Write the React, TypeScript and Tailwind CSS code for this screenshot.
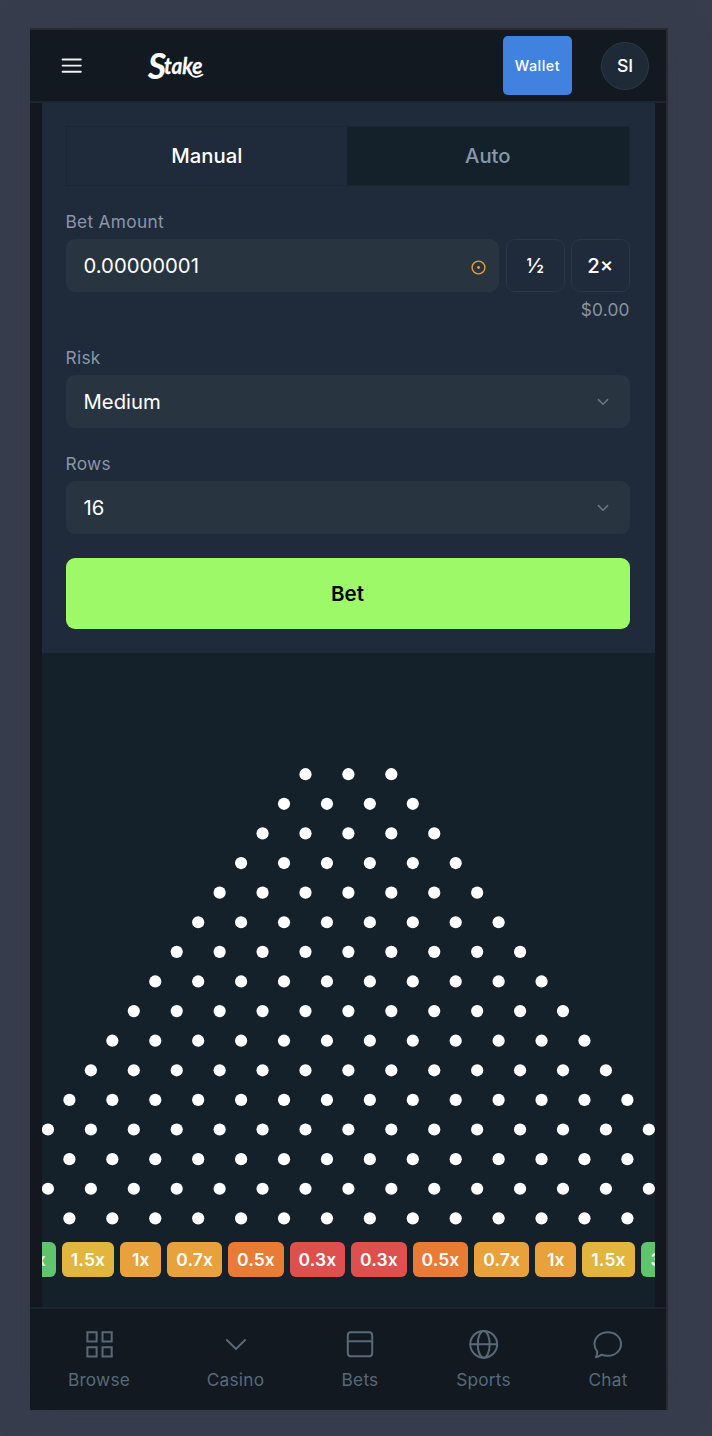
import React from "react";

const ROWS = Array.from({ length: 16 }, (_, i) => i + 3);
const PEG_GAP_X = 42.92;
const PEG_GAP_Y = 29.61;

const CHIPS: { label: string; style: string }[] = [
  { label: "3x", style: "w-[41px] bg-[#5fc46b]" },
  { label: "1.5x", style: "w-[52.5px] bg-[#e2b53f]" },
  { label: "1x", style: "w-[41px] bg-[#e9a13b]" },
  { label: "0.7x", style: "w-[55px] bg-[#e9a13b]" },
  { label: "0.5x", style: "w-[55.5px] bg-[#e97b35]" },
  { label: "0.3x", style: "w-[55.5px] bg-[#de504d]" },
  { label: "0.3x", style: "w-[55.5px] bg-[#de504d]" },
  { label: "0.5x", style: "w-[55.5px] bg-[#e97b35]" },
  { label: "0.7x", style: "w-[55px] bg-[#e9a13b]" },
  { label: "1x", style: "w-[41px] bg-[#e9a13b]" },
  { label: "1.5x", style: "w-[52.5px] bg-[#e2b53f]" },
  { label: "3x", style: "w-[41px] bg-[#5fc46b]" },
];

function Chevron() {
  return (
    <svg className="h-[18px] w-[18px]" viewBox="0 0 18 18" fill="none" stroke="#6b7684" strokeWidth="1.5" strokeLinecap="round" strokeLinejoin="round">
      <path d="M4.4 6.6L9 11.2L13.6 6.6" />
    </svg>
  );
}

function Select({ label, value }: { label: string; value: string }) {
  return (
    <div>
      <div className="h-[27px] text-[17.3px] leading-[20px] tracking-[0.3px] text-[#8b97aa]">{label}</div>
      <div className="flex h-[53px] items-center justify-between rounded-[9px] bg-[#283541] pr-[18px] pl-[18px] text-[20.3px] text-white">
        <span className="pt-[2px]">{value}</span>
        <Chevron />
      </div>
    </div>
  );
}

function NavItem({ label, width, children }: { label: string; width: string; children: React.ReactNode }) {
  return (
    <div className={"flex shrink-0 flex-col items-center text-[#586979] " + width}>
      <svg className="h-[36px] w-[36px]" viewBox="0 0 36 36" fill="none" stroke="currentColor" strokeWidth="2" strokeLinecap="round" strokeLinejoin="round">
        {children}
      </svg>
      <span className="mt-[7px] text-[17.3px] leading-[22px] tracking-[0.22px]">{label}</span>
    </div>
  );
}

function PegBoard() {
  return (
    <svg className="h-[460px] w-[613px] shrink-0" viewBox="0 0 613 460" fill="#ffffff">
      {ROWS.map((count, row) =>
        Array.from({ length: count }, (_, i) => (
          <circle key={`${row}-${i}`} cx={306.4 + (i - (count - 1) / 2) * PEG_GAP_X} cy={6.2 + row * PEG_GAP_Y} r="6.1" />
        )),
      )}
    </svg>
  );
}

export default function App() {
  return (
    <div className="h-[1436px] w-[712px] overflow-hidden bg-[#383d4d] pt-[28px] pl-[30px] font-['Inter',sans-serif] antialiased">
      <div className="flex h-[1382px] w-[638px] flex-col border-t-2 border-r-2 border-[#2a2a30] bg-[#14171f] shadow-[0_0_40px_rgba(45,55,65,0.25)]">
        <header className="flex h-[73px] shrink-0 items-center border-b-2 border-[#1a2733] bg-[#121920]">
          <svg className="ml-[31px] h-[20px] w-[22px]" viewBox="0 0 22 20" stroke="#f2f2f0" strokeWidth="1.9" strokeLinecap="round">
            <path d="M1.6 3.5H19.8M1.6 9.6H19.8M1.6 15.7H19.8" />
          </svg>
          <svg className="ml-[60px] h-[40px] w-[70px] overflow-visible" viewBox="0 0 70 40" role="img" aria-label="Stake">
            <g fill="#ffffff" stroke="#ffffff" strokeLinejoin="round" fontFamily="Lato, sans-serif" fontStyle="italic" fontWeight="700">
              <text x="5" y="32.6" fontSize="35.5" strokeWidth="0.2" textLength="18" lengthAdjust="spacingAndGlyphs">S</text>
              <text x="21" y="28.2" fontSize="23.5" strokeWidth="0.3" textLength="38.5" lengthAdjust="spacingAndGlyphs">take</text>
            </g>
            <path d="M47.5 28C50 31.6 55.5 31.6 59.6 28.6" fill="none" stroke="#ffffff" strokeWidth="1.8" strokeLinecap="round" />
          </svg>
          <button className="ml-[290px] h-[59px] w-[69px] rounded-[5px] bg-[#4181df] pt-[1px] text-[14.4px] font-medium tracking-[0.5px] text-white">Wallet</button>
          <div className="ml-[29px] flex h-[48px] w-[48px] items-center justify-center rounded-full border border-[#2c3944] bg-[#1f2a38] pt-[1px] text-[17.7px] font-medium text-white">SI</div>
        </header>

        <main className="mr-[11px] ml-[12px] flex min-h-0 flex-1 flex-col overflow-hidden">
          <section className="h-[550px] shrink-0 bg-[#1f2a3a] pt-[23px] pr-[25.4px] pl-[23.5px]">
            <div className="flex h-[60px] border border-[#1a2633] text-[20.3px] font-medium">
              <div className="flex w-[280.5px] items-center justify-center text-white">Manual</div>
              <div className="flex flex-1 items-center justify-center bg-[#14212b] text-[#8997aa]">Auto</div>
            </div>
            <div className="mt-[26px]">
              <div className="h-[27px] text-[17.3px] leading-[20px] tracking-[0.3px] text-[#8b97aa]">Bet Amount</div>
              <div className="flex h-[53px] gap-[6.4px]">
                <div className="flex flex-1 items-center justify-between rounded-[9px] bg-[#283541] pr-[12px] pl-[18px] text-[20.3px] text-white">
                  <span className="pt-[2px]">0.00000001</span>
                  <svg className="mt-[3px] h-[17px] w-[17px]" viewBox="0 0 17 17" fill="none">
                    <circle cx="8.5" cy="8.5" r="6.4" stroke="#e99f35" strokeWidth="1.4" />
                    <circle cx="8.5" cy="8.5" r="1.4" fill="#e99f35" />
                  </svg>
                </div>
                <button className="w-[58.7px] rounded-[9px] border border-[#2a3744] pt-[2px] text-[20.3px] font-medium text-white">½</button>
                <button className="w-[58.7px] rounded-[9px] border border-[#2a3744] pt-[2px] text-[20.3px] font-medium text-white">2×</button>
              </div>
              <div className="mt-[8px] h-[20px] text-right text-[17.3px] leading-[20px] tracking-[0.2px] text-[#8b93a2]">$0.00</div>
            </div>
            <div className="mt-[28px]">
              <Select label="Risk" value="Medium" />
            </div>
            <div className="mt-[26px]">
              <Select label="Rows" value="16" />
            </div>
            <button className="mt-[24px] block h-[71px] w-full rounded-[9px] bg-[#9df968] pt-[2px] text-[20.5px] font-semibold text-black">Bet</button>
          </section>

          <section className="flex min-h-0 flex-1 flex-col items-center overflow-hidden bg-[#14212b] pt-[115px]">
            <PegBoard />
            <div className="mt-[14px] mr-[0.6px] flex shrink-0 gap-[6px]">
              {CHIPS.map((chip, i) => (
                <div key={i} className={"flex h-[35.4px] shrink-0 items-center justify-center rounded-[6px] pt-[1px] text-[17.5px] font-semibold tracking-[0.1px] text-white " + chip.style}>
                  {chip.label}
                </div>
              ))}
            </div>
          </section>
        </main>

        <footer className="flex h-[103px] shrink-0 border-t-2 border-[#192630] bg-[#121920] pt-[17px] pl-[9px]">
          <NavItem label="Browse" width="w-[120px]">
            <path d="M6.4 6.3h9.2v9.2H6.4zM21.5 6.3h9.2v9.2h-9.2zM6.4 21.2h9.2v9.2H6.4zM21.5 21.2h9.2v9.2h-9.2z" strokeLinejoin="miter" />
          </NavItem>
          <NavItem label="Casino" width="w-[153px]">
            <path d="M8.8 14L18 23L27 14" />
          </NavItem>
          <NavItem label="Bets" width="w-[96px]">
            <rect x="5.8" y="6.2" width="24.4" height="24" rx="3" />
            <path d="M5.8 15.2H30.2" />
          </NavItem>
          <NavItem label="Sports" width="w-[151px]">
            <circle cx="17.7" cy="18.3" r="13.4" />
            <ellipse cx="17.7" cy="18.3" rx="6" ry="13.4" />
            <path d="M4.3 18.3H31.1" />
          </NavItem>
          <NavItem label="Chat" width="w-[98px]">
            <path d="M17.8 6.2C25.4 6.2 31 11.4 31 18S25.4 29.8 17.8 29.8C15.4 29.8 13.2 29.3 11.2 28.8C9.4 30.6 7.9 31 6 31.2C7.2 29.2 7.5 27.2 7.1 25.2C5.3 23.2 4.5 21 4.5 18C4.5 11.4 10.2 6.2 17.8 6.2Z" />
          </NavItem>
        </footer>
      </div>
    </div>
  );
}
